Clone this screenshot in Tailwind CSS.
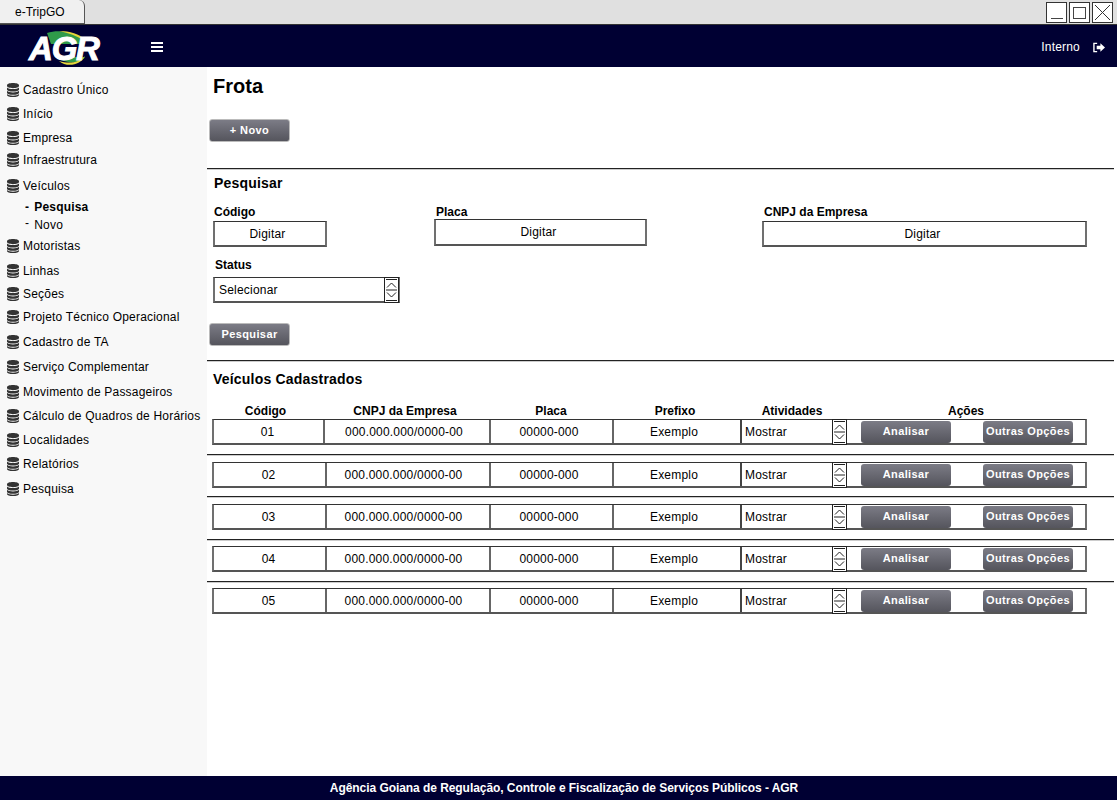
<!DOCTYPE html>
<html lang="pt-BR">
<head>
<meta charset="UTF-8">
<title>e-TripGO</title>
<script src="https://cdn.jsdelivr.net/npm/@tailwindcss/browser@4"></script>
</head>
<body class="h-[800px] w-[1117px] overflow-hidden bg-white font-['Liberation_Sans',Arial,sans-serif] text-[12px] text-black">
<svg class="hidden">
  <symbol id="db" viewBox="0 0 12 14">
    <path fill="#333" d="M6 0C2.7 0 0 .9 0 2.2v.9C0 4.3 2.7 5.2 6 5.2s6-.9 6-2.1v-.9C12 .9 9.3 0 6 0zM0 4.4v2c0 1.2 2.7 2.1 6 2.1s6-.9 6-2.1v-2C11 5.600 8.500 6.100 6 6.100S1 5.600 0 4.400zM0 7.700v2C0 10.900 2.700 11.800 6 11.800s6-.9 6-2.100v-2C11 8.900 8.500 9.400 6 9.400S1 8.900 0 7.700zM0 11v.9C0 13.100 2.700 14 6 14s6-.9 6-2.100V11c-1 1.200-3.500 1.700-6 1.700S1 12.200 0 11z"/>
  </symbol>
  <symbol id="spin" viewBox="0 0 15 26">
    <rect x="0.500" y="0.500" width="14" height="25" fill="#fff" stroke="#222"/>
    <path fill="none" stroke="#222" d="M2 2.500h11M2 23.500h11M2 13h11"/>
    <path fill="none" stroke="#222" d="M3 10.500l4.500-4.500 4.500 4.500M3 15.500l4.500 4.500 4.500-4.500"/>
  </symbol>
</svg>

<!-- barra da janela -->
<div class="flex h-[24px] items-stretch justify-between bg-[#e0e0e0]">
  <div class="flex w-[85px] items-center rounded-tr-md border-r border-b border-[#555] bg-[#f0f0f0] pl-[15px] text-[12px]">e-TripGO</div>
  <div class="flex items-center gap-[2px] pr-[4px] pt-[1px]">
    <div class="flex h-[21px] w-[21px] items-end justify-center border border-[#333] bg-white pb-[3px]"><div class="h-[1px] w-[12px] bg-[#444]"></div></div>
    <div class="flex h-[21px] w-[21px] items-center justify-center border border-[#333] bg-white"><div class="h-[12px] w-[13px] border border-[#444]"></div></div>
    <div class="h-[21px] w-[21px] border border-[#333] bg-white">
      <svg viewBox="0 0 19 19" class="h-[19px] w-[19px]"><path d="M2 2l15 15M17 2L2 17" stroke="#333" fill="none"/></svg>
    </div>
  </div>
</div>

<!-- topo -->
<header class="flex h-[43px] items-center justify-between border-t border-[#333] bg-[#000033] pt-[2px] text-white">
  <div class="flex items-center">
    <div class="relative ml-[29px] h-[40px] w-[74px]">
      <svg viewBox="0 0 74 40" class="absolute inset-0 h-[40px] w-[74px]">
        <path d="M18 6C30 2 45 5 56 13L56 17L22 17z" fill="#2f9a4a"/>
        <path d="M30 4C41 4 50 7 57 13L54 13C48 9 40 6 30 4z" fill="#e5d63a"/>
        <path d="M26 30L56 30C52 36 42 37 32 33z" fill="#2f9a4a"/>
        <path d="M30 34C40 37 50 36 56 29C52 38 38 41 30 34z" fill="#e5d63a"/>
      </svg>
      <span class="absolute top-[7px] left-0 text-[33px] leading-[30px] font-bold tracking-[-1.200px] text-white italic [-webkit-text-stroke:1px_white]">AGR</span>
    </div>
    <div class="ml-[48px] flex w-[12px] flex-col gap-[2px]">
      <div class="h-[2px] bg-white"></div><div class="h-[2px] bg-white"></div><div class="h-[2px] bg-white"></div>
    </div>
  </div>
  <div class="flex items-center pr-[12px]">
    <span class="text-[12px] tracking-[0.200px]">Interno</span>
    <svg viewBox="0 0 13 11" class="ml-[13px] h-[11px] w-[12px]"><path d="M4.500 1H1v9h3.500" fill="none" stroke="#fff" stroke-width="1.500"/><path d="M4 3.500h4V1l5 4.500L8 10V7.500H4z" fill="#fff"/></svg>
  </div>
</header>

<div class="flex h-[709px]">
  <!-- menu lateral -->
  <aside class="w-[207px] shrink-0 bg-[#f8f8f8] pt-[14px] pl-[7px] text-[12px] tracking-[0.200px]">
    <div class="flex h-[18px] items-center gap-[4px]"><svg class="h-[14px] w-[12px]"><use href="#db"/></svg>Cadastro Único</div>
    <div class="mt-[6px] flex h-[18px] items-center gap-[4px]"><svg class="h-[14px] w-[12px]"><use href="#db"/></svg>Início</div>
    <div class="mt-[6px] flex h-[18px] items-center gap-[4px]"><svg class="h-[14px] w-[12px]"><use href="#db"/></svg>Empresa</div>
    <div class="mt-[4px] flex h-[18px] items-center gap-[4px]"><svg class="h-[14px] w-[12px]"><use href="#db"/></svg>Infraestrutura</div>
    <div class="mt-[8px] flex h-[18px] items-center gap-[4px]"><svg class="h-[14px] w-[12px]"><use href="#db"/></svg>Veículos</div>
    <div class="mt-[3px] flex h-[18px] items-center gap-[5px] pl-[18px] font-bold"><span>-</span>Pesquisa</div>
    <div class="flex h-[18px] items-center gap-[5px] pl-[18px]"><span class="-translate-y-[2px]">-</span>Novo</div>
    <div class="mt-[3px] flex h-[18px] items-center gap-[4px]"><svg class="h-[14px] w-[12px]"><use href="#db"/></svg>Motoristas</div>
    <div class="mt-[7px] flex h-[18px] items-center gap-[4px]"><svg class="h-[14px] w-[12px]"><use href="#db"/></svg>Linhas</div>
    <div class="mt-[5px] flex h-[18px] items-center gap-[4px]"><svg class="h-[14px] w-[12px]"><use href="#db"/></svg>Seções</div>
    <div class="mt-[5px] flex h-[18px] items-center gap-[4px]"><svg class="h-[14px] w-[12px]"><use href="#db"/></svg>Projeto Técnico Operacional</div>
    <div class="mt-[7px] flex h-[18px] items-center gap-[4px]"><svg class="h-[14px] w-[12px]"><use href="#db"/></svg>Cadastro de TA</div>
    <div class="mt-[7px] flex h-[18px] items-center gap-[4px]"><svg class="h-[14px] w-[12px]"><use href="#db"/></svg>Serviço Complementar</div>
    <div class="mt-[7px] flex h-[18px] items-center gap-[4px]"><svg class="h-[14px] w-[12px]"><use href="#db"/></svg>Movimento de Passageiros</div>
    <div class="mt-[6px] flex h-[18px] items-center gap-[4px]"><svg class="h-[14px] w-[12px]"><use href="#db"/></svg>Cálculo de Quadros de Horários</div>
    <div class="mt-[6px] flex h-[18px] items-center gap-[4px]"><svg class="h-[14px] w-[12px]"><use href="#db"/></svg>Localidades</div>
    <div class="mt-[6px] flex h-[18px] items-center gap-[4px]"><svg class="h-[14px] w-[12px]"><use href="#db"/></svg>Relatórios</div>
    <div class="mt-[7px] flex h-[18px] items-center gap-[4px]"><svg class="h-[14px] w-[12px]"><use href="#db"/></svg>Pesquisa</div>
  </aside>

  <!-- conteudo -->
  <main class="w-[910px] pr-[3px] tracking-[0.200px]">
    <h1 class="pt-[8px] pl-[6px] text-[20px] leading-[23px] font-bold tracking-normal">Frota</h1>
    <div class="pt-[21px] pl-[2px]">
      <button class="h-[23px] w-[81px] rounded-[3px] border border-[#bbb] bg-gradient-to-b from-[#7c7c86] to-[#55555d] text-[11px] font-bold tracking-[0.400px] text-white">+ Novo</button>
    </div>
    <div class="mt-[26px] h-[2px] border-t border-b border-t-[#222] border-b-[#ccc]"></div>

    <h2 class="pt-[5px] pl-[7px] text-[14px] leading-[16px] font-bold">Pesquisar</h2>
    <div class="flex pt-[14px] pl-[6px]">
      <div class="w-[221px]">
        <div class="pl-[1px] text-[12px] leading-[14px] font-bold tracking-normal">Código</div>
        <div class="mt-[2px] flex h-[26px] w-[114px] items-center justify-center border-x-2 border-t border-b-2 border-x-[#707070] border-t-[#333] border-b-[#555] pr-[5px]">Digitar</div>
      </div>
      <div class="w-[328px]">
        <div class="pl-[2px] text-[12px] leading-[14px] font-bold tracking-normal">Placa</div>
        <div class="flex h-[27px] w-[213px] items-center justify-center border-x-2 border-t border-b-2 border-x-[#707070] border-t-[#333] border-b-[#555] pr-[4px]">Digitar</div>
      </div>
      <div>
        <div class="pl-[2px] text-[12px] leading-[14px] font-bold tracking-normal">CNPJ da Empresa</div>
        <div class="mt-[2px] flex h-[26px] w-[325px] items-center justify-center border-x-2 border-t border-b-2 border-x-[#707070] border-t-[#333] border-b-[#555] pr-[4px]">Digitar</div>
      </div>
    </div>
    <div class="pt-[11px] pl-[6px]">
      <div class="pl-[2px] text-[12px] leading-[14px] font-bold tracking-normal">Status</div>
      <div class="mt-[5px] flex h-[26px] w-[187px] items-center justify-between border-x-2 border-t border-b-2 border-x-[#707070] border-t-[#333] border-b-[#555] pl-[4px]">Selecionar<svg class="-mr-[1px] h-[26px] w-[15px] shrink-0"><use href="#spin"/></svg></div>
    </div>
    <div class="pt-[20px] pl-[2px]">
      <button class="h-[23px] w-[81px] rounded-[3px] border border-[#bbb] bg-gradient-to-b from-[#7c7c86] to-[#55555d] text-[11px] font-bold tracking-[0.400px] text-white">Pesquisar</button>
    </div>
    <div class="mt-[14px] h-[2px] border-t border-b border-t-[#222] border-b-[#ccc]"></div>

    <h2 class="pt-[9px] pl-[6px] text-[14px] leading-[16px] font-bold">Veículos Cadastrados</h2>

    <div class="ml-[5px] grid w-[875px] pt-[17px] text-center text-[12px] leading-[14px] font-bold tracking-normal [grid-template-columns:107px_172px_120px_128px_106px_242px]">
      <div>Código</div><div>CNPJ da Empresa</div><div>Placa</div><div>Prefixo</div><div>Atividades</div><div>Ações</div>
    </div>

    <div class="ml-[5px] mt-[1px] grid h-[26px] w-[875px] grid-rows-[23px] border-x-2 border-t border-b-2 border-x-[#707070] border-t-[#333] border-b-[#555] text-center [grid-template-columns:109px_166px_123px_128px_107px_1fr]">
      <div class="flex items-center justify-center pr-[2px]">01</div>
      <div class="flex items-center justify-center border-l-2 border-[#666] pr-[6px]">000.000.000/0000-00</div>
      <div class="flex items-center justify-center border-l-2 border-[#666] pr-[5px]">00000-000</div>
      <div class="flex items-center justify-center border-l-2 border-[#666] pr-[6px]">Exemplo</div>
      <div class="flex items-center justify-between border-l-2 border-[#444] pl-[3px]">Mostrar<svg class="h-[26px] w-[15px] shrink-0"><use href="#spin"/></svg></div>
      <div class="flex items-center justify-between pr-[12px] pl-[14px]">
        <button class="h-[22px] w-[90px] rounded-[3px] bg-gradient-to-b from-[#7c7c86] to-[#55555d] text-[11px] font-bold tracking-[0.400px] text-white">Analisar</button>
        <button class="h-[22px] w-[90px] rounded-[3px] bg-gradient-to-b from-[#7c7c86] to-[#55555d] text-[11px] font-bold tracking-[0.400px] text-white">Outras Opções</button>
      </div>
    </div>
    <div class="mt-[9px] h-[2px] border-t border-b border-t-[#222] border-b-[#ccc]"></div>

    <div class="ml-[5px] mt-[6px] grid h-[26px] w-[875px] grid-rows-[23px] border-x-2 border-t border-b-2 border-x-[#707070] border-t-[#333] border-b-[#555] text-center [grid-template-columns:111px_164px_123px_128px_107px_1fr]">
      <div class="flex items-center justify-center pr-[2px]">02</div>
      <div class="flex items-center justify-center border-l-2 border-[#666] pr-[9px]">000.000.000/0000-00</div>
      <div class="flex items-center justify-center border-l-2 border-[#666] pr-[5px]">00000-000</div>
      <div class="flex items-center justify-center border-l-2 border-[#666] pr-[6px]">Exemplo</div>
      <div class="flex items-center justify-between border-l-2 border-[#444] pl-[3px]">Mostrar<svg class="h-[26px] w-[15px] shrink-0"><use href="#spin"/></svg></div>
      <div class="flex items-center justify-between pr-[12px] pl-[14px]">
        <button class="h-[22px] w-[90px] rounded-[3px] bg-gradient-to-b from-[#7c7c86] to-[#55555d] text-[11px] font-bold tracking-[0.400px] text-white">Analisar</button>
        <button class="h-[22px] w-[90px] rounded-[3px] bg-gradient-to-b from-[#7c7c86] to-[#55555d] text-[11px] font-bold tracking-[0.400px] text-white">Outras Opções</button>
      </div>
    </div>
    <div class="mt-[8px] h-[2px] border-t border-b border-t-[#222] border-b-[#ccc]"></div>

    <div class="ml-[5px] mt-[6px] grid h-[26px] w-[875px] grid-rows-[23px] border-x-2 border-t border-b-2 border-x-[#707070] border-t-[#333] border-b-[#555] text-center [grid-template-columns:111px_164px_123px_128px_107px_1fr]">
      <div class="flex items-center justify-center pr-[2px]">03</div>
      <div class="flex items-center justify-center border-l-2 border-[#666] pr-[9px]">000.000.000/0000-00</div>
      <div class="flex items-center justify-center border-l-2 border-[#666] pr-[5px]">00000-000</div>
      <div class="flex items-center justify-center border-l-2 border-[#666] pr-[6px]">Exemplo</div>
      <div class="flex items-center justify-between border-l-2 border-[#444] pl-[3px]">Mostrar<svg class="h-[26px] w-[15px] shrink-0"><use href="#spin"/></svg></div>
      <div class="flex items-center justify-between pr-[12px] pl-[14px]">
        <button class="h-[22px] w-[90px] rounded-[3px] bg-gradient-to-b from-[#7c7c86] to-[#55555d] text-[11px] font-bold tracking-[0.400px] text-white">Analisar</button>
        <button class="h-[22px] w-[90px] rounded-[3px] bg-gradient-to-b from-[#7c7c86] to-[#55555d] text-[11px] font-bold tracking-[0.400px] text-white">Outras Opções</button>
      </div>
    </div>
    <div class="mt-[9px] h-[2px] border-t border-b border-t-[#222] border-b-[#ccc]"></div>

    <div class="ml-[5px] mt-[5px] grid h-[26px] w-[875px] grid-rows-[23px] border-x-2 border-t border-b-2 border-x-[#707070] border-t-[#333] border-b-[#555] text-center [grid-template-columns:111px_164px_123px_128px_107px_1fr]">
      <div class="flex items-center justify-center pr-[2px]">04</div>
      <div class="flex items-center justify-center border-l-2 border-[#666] pr-[9px]">000.000.000/0000-00</div>
      <div class="flex items-center justify-center border-l-2 border-[#666] pr-[5px]">00000-000</div>
      <div class="flex items-center justify-center border-l-2 border-[#666] pr-[6px]">Exemplo</div>
      <div class="flex items-center justify-between border-l-2 border-[#444] pl-[3px]">Mostrar<svg class="h-[26px] w-[15px] shrink-0"><use href="#spin"/></svg></div>
      <div class="flex items-center justify-between pr-[12px] pl-[14px]">
        <button class="h-[22px] w-[90px] rounded-[3px] bg-gradient-to-b from-[#7c7c86] to-[#55555d] text-[11px] font-bold tracking-[0.400px] text-white">Analisar</button>
        <button class="h-[22px] w-[90px] rounded-[3px] bg-gradient-to-b from-[#7c7c86] to-[#55555d] text-[11px] font-bold tracking-[0.400px] text-white">Outras Opções</button>
      </div>
    </div>
    <div class="mt-[9px] h-[2px] border-t border-b border-t-[#222] border-b-[#ccc]"></div>

    <div class="ml-[5px] mt-[5px] grid h-[26px] w-[875px] grid-rows-[23px] border-x-2 border-t border-b-2 border-x-[#707070] border-t-[#333] border-b-[#555] text-center [grid-template-columns:111px_164px_123px_128px_107px_1fr]">
      <div class="flex items-center justify-center pr-[2px]">05</div>
      <div class="flex items-center justify-center border-l-2 border-[#666] pr-[9px]">000.000.000/0000-00</div>
      <div class="flex items-center justify-center border-l-2 border-[#666] pr-[5px]">00000-000</div>
      <div class="flex items-center justify-center border-l-2 border-[#666] pr-[6px]">Exemplo</div>
      <div class="flex items-center justify-between border-l-2 border-[#444] pl-[3px]">Mostrar<svg class="h-[26px] w-[15px] shrink-0"><use href="#spin"/></svg></div>
      <div class="flex items-center justify-between pr-[12px] pl-[14px]">
        <button class="h-[22px] w-[90px] rounded-[3px] bg-gradient-to-b from-[#7c7c86] to-[#55555d] text-[11px] font-bold tracking-[0.400px] text-white">Analisar</button>
        <button class="h-[22px] w-[90px] rounded-[3px] bg-gradient-to-b from-[#7c7c86] to-[#55555d] text-[11px] font-bold tracking-[0.400px] text-white">Outras Opções</button>
      </div>
    </div>
  </main>
</div>

<footer class="flex h-[24px] items-center justify-center bg-[#000033] pl-[11px] text-[12px] font-bold tracking-[-0.060px] text-white">Agência Goiana de Regulação, Controle e Fiscalização de Serviços Públicos - AGR</footer>
</body>
</html>
